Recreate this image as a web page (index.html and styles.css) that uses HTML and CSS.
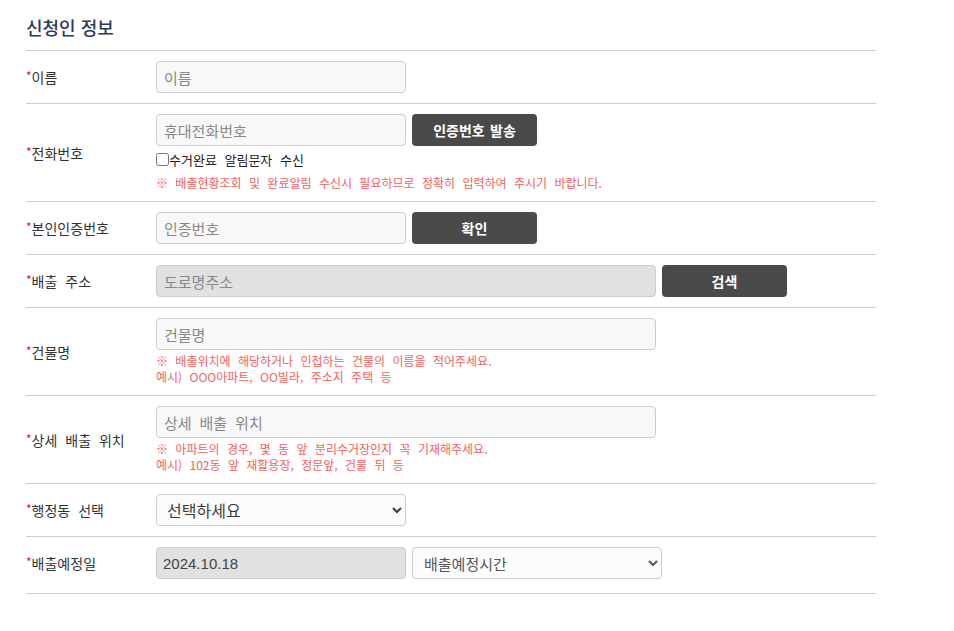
FILE: index.html
```html
<!DOCTYPE html>
<html lang="ko">
<head>
<meta charset="utf-8">
<title>신청인 정보</title>
<link rel="stylesheet" href="styles.css">
</head>
<body>
<div class="wrap">
  <h2 class="title">신청인 정보</h2>
  <div class="form">
    <div class="row">
      <div class="label"><span class="req">*</span>이름</div>
      <div class="field">
        <div class="line"><input class="inp w250" type="text" placeholder="이름"></div>
      </div>
    </div>
    <div class="row">
      <div class="label"><span class="req">*</span>전화번호</div>
      <div class="field">
        <div class="line"><input class="inp w250" type="text" placeholder="휴대전화번호"><button class="btn">인증번호 발송</button></div>
        <label class="chk"><input type="checkbox">수거완료 알림문자 수신</label>
        <p class="note">※ 배출현황조회 및 완료알림 수신시 필요하므로 정확히 입력하여 주시기 바랍니다.</p>
      </div>
    </div>
    <div class="row">
      <div class="label"><span class="req">*</span>본인인증번호</div>
      <div class="field">
        <div class="line"><input class="inp w250" type="text" placeholder="인증번호"><button class="btn">확인</button></div>
      </div>
    </div>
    <div class="row">
      <div class="label"><span class="req">*</span>배출 주소</div>
      <div class="field">
        <div class="line"><input class="inp w500 ro" type="text" placeholder="도로명주소" readonly><button class="btn">검색</button></div>
      </div>
    </div>
    <div class="row">
      <div class="label"><span class="req">*</span>건물명</div>
      <div class="field">
        <div class="line"><input class="inp w500" type="text" placeholder="건물명"></div>
        <p class="note notes">※ 배출위치에 해당하거나 인접하는 건물의 이름을 적어주세요.<br>예시) OOO아파트, OO빌라, 주소지 주택 등</p>
      </div>
    </div>
    <div class="row">
      <div class="label"><span class="req">*</span>상세 배출 위치</div>
      <div class="field">
        <div class="line"><input class="inp w500" type="text" placeholder="상세 배출 위치"></div>
        <p class="note notes">※ 아파트의 경우, 몇 동 앞 분리수거장인지 꼭 기재해주세요.<br>예시) 102동 앞 재활용장, 정문앞, 건물 뒤 등</p>
      </div>
    </div>
    <div class="row">
      <div class="label"><span class="req">*</span>행정동 선택</div>
      <div class="field">
        <div class="line"><select class="sel w250 big"><option>선택하세요</option></select></div>
      </div>
    </div>
    <div class="row last">
      <div class="label"><span class="req">*</span>배출예정일</div>
      <div class="field">
        <div class="line"><input class="inp w250 ro date" type="text" value="2024.10.18" readonly><select class="sel w250 small"><option>배출예정시간</option></select></div>
      </div>
    </div>
  </div>
</div>
</body>
</html>
```

FILE: styles.css
```css
* { box-sizing: border-box; }
html, body { margin: 0; padding: 0; background: #fff; }
body {
  font-family: "Noto Sans CJK KR", "Liberation Sans", sans-serif;
  color: #333;
  word-spacing: 0.25em;
}
.wrap {
  width: 850px;
  margin-left: 26px;
}
.title {
  margin: 0;
  padding: 14px 0 10px;
  font-size: 18px;
  line-height: 26px;
  font-weight: 500;
  color: #2a3b5a;
  border-bottom: 1px solid #cccccc;
  word-spacing: normal;
}
.row {
  display: flex;
  align-items: center;
  padding: 10px 0;
  border-bottom: 1px solid #cccccc;
}
.row.last { padding-bottom: 14px; }
.label {
  width: 130px;
  flex: none;
  font-size: 14px;
  color: #333;
}
.req {
  color: #e02020;
  font-size: 12px;
  vertical-align: 2px;
}
.field { flex: 1; }
.line {
  display: flex;
  gap: 6px;
  align-items: center;
}
.inp {
  height: 32px;
  border: 1px solid #cccccc;
  border-radius: 4px;
  background: #f8f8f8;
  padding: 0 7px;
  font-family: "Noto Sans CJK KR", "Liberation Sans", sans-serif;
  font-size: 15px;
  word-spacing: 0.25em;
  color: #444;
  outline: none;
}
.inp::placeholder { color: #888; }
.inp.ro { background: #e1e1e1; }
.inp.date {
  font-family: "Liberation Sans", "Noto Sans CJK KR", sans-serif;
  font-size: 15px;
  color: #444;
  padding-left: 6px;
}
.w250 { width: 250px; }
.w500 { width: 500px; }
.btn {
  width: 125px;
  height: 32px;
  border: 0;
  border-radius: 4px;
  background: #4a4a4a;
  color: #fff;
  font-family: "Noto Sans CJK KR", "Liberation Sans", sans-serif;
  font-size: 14px;
  font-weight: 700;
  word-spacing: 0.1em;
  padding: 0;
}
.sel {
  height: 32px;
  border: 1px solid #cccccc;
  border-radius: 4px;
  background: #fcfcfc;
  font-family: "Noto Sans CJK KR", "Liberation Sans", sans-serif;
  color: #333;
  padding: 0 8px;
}
.sel.big { font-size: 16px; padding-left: 6px; color: #3a3a3a; }
.sel.small { font-size: 15px; color: #555; padding-left: 7px; }
.chk {
  display: flex;
  align-items: center;
  margin-top: 3px;
  height: 20px;
  font-size: 13px;
  color: #222;
}
.chk input {
  margin: 0;
  width: 13px;
  height: 13px;
}
.note {
  margin: 6px 0 0;
  font-size: 12px;
  line-height: 16px;
  color: #f26262;
}
.note.notes { margin-top: 3px; }
```
